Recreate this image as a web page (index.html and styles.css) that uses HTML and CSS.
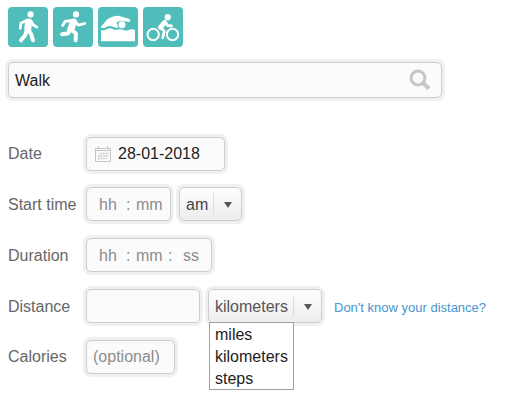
FILE: index.html
```html
<!DOCTYPE html>
<html lang="en">
  <head>
    <meta charset="UTF-8" />
    <meta name="viewport" content="width=device-width, initial-scale=1.0" />
    <title>Log Activity</title>
    <link rel="stylesheet" href="styles.css">
  </head>
  <body>
    <div class="activities">
      <a class="activity" title="Walk">
        <svg viewBox="0 0 40 40">
          <circle cx="22.6" cy="7.4" r="3.1" />
          <path class="torso" d="M20.6 15L19.8 22" />
          <path class="limb" d="M18.5 13.5L12.8 16.3L12.3 21.3M23 14L25.3 18L28.8 20" />
          <path class="leg" d="M19 23L17 28.5L13 33.3M20.6 23L23.3 27.5L25 33.3" />
        </svg>
      </a>
      <a class="activity" title="Run">
        <svg viewBox="0 0 40 40">
          <circle cx="23" cy="7.4" r="3.1" />
          <path class="torso" d="M20.5 15L18 22" />
          <path class="limb" d="M19 13.5L12 14.5L9.7 18.5M22 14L25.3 18.2L31.8 16.5" />
          <path class="leg" d="M17 22L14.8 26.5L9 27.2M18 22.5L23 26.5L22.6 33.3" />
        </svg>
      </a>
      <a class="activity" title="Swim">
        <svg viewBox="0 0 40 40">
          <path d="M3 19.8L9 12.5Q14 9 20.5 8.8L31.5 12Q33.2 13.8 31 15L23 13.8L18.5 15.2L20.3 20.3Q18 21.6 15 19.8Q11.5 18 8.5 20.1Q5.5 21.8 3 20.4Z" />
          <circle cx="24" cy="17.8" r="3.5" />
          <path d="M3 22.8Q5.8 24.2 8.7 22.3Q11.5 20.4 14.5 22.1Q17.5 23.8 20 22.6Q23 21.6 26 23.2Q29 24.2 32 22.6Q34.5 21.8 37 23V34.3H3Z" />
        </svg>
      </a>
      <a class="activity" title="Cycle">
        <svg viewBox="0 0 40 40">
          <circle cx="24.7" cy="10.2" r="3.1" />
          <circle class="wheel" cx="10.2" cy="27.5" r="5.7" />
          <circle class="wheel" cx="29.5" cy="27.5" r="5.7" />
          <path class="rider" d="M21.5 15.5L17.5 20.3" />
          <path class="limb" d="M22.3 15L24.5 18.5L28.5 18.8M17.5 20.8L21.3 24L19.7 30.8" />
        </svg>
      </a>
    </div>

    <div class="field search">
      <span>Walk</span>
      <svg class="search-icon" viewBox="0 0 22 22">
        <circle cx="9" cy="9" r="6.9" />
        <path d="M14 14L20 19.5" />
      </svg>
    </div>

    <div class="form">
      <div class="row">
        <label>Date</label>
        <div class="field date">
          <svg class="calendar" viewBox="0 0 16 16">
            <path d="M.5 2.5H15.5V15.5H.5ZM.5 4.5H15.5M3.5 0V3M12.5 0V3" />
            <path class="days" d="M5 7.5H14M3 10H14M3 12.5H12" />
          </svg>
          <span>28-01-2018</span>
        </div>
      </div>

      <div class="row">
        <label class="low">Start time</label>
        <div class="field time start">
          <span class="hours">hh</span>
          <span class="colon">:</span>
          <span class="minutes">mm</span>
        </div>
        <div class="field select ampm">
          <span class="value">am</span>
          <span class="arrow"></span>
        </div>
      </div>

      <div class="row">
        <label class="low">Duration</label>
        <div class="field time duration">
          <span class="hours">hh</span>
          <span class="colon">:</span>
          <span class="minutes">mm</span>
          <span class="colon">:</span>
          <span class="seconds">ss</span>
        </div>
      </div>

      <div class="row">
        <label class="low">Distance</label>
        <div class="field distance"></div>
        <div class="field select unit">
          <span class="value">kilometers</span>
          <span class="arrow"></span>
          <ul class="menu">
            <li>miles</li>
            <li>kilometers</li>
            <li>steps</li>
          </ul>
        </div>
        <a class="help">Don't know your distance?</a>
      </div>

      <div class="row">
        <label>Calories</label>
        <div class="field calories">(optional)</div>
      </div>
    </div>
  </body>
</html>
```
FILE: styles.css
```css
* {
  box-sizing: border-box;
}
body {
  margin: 0;
  min-height: 402px;
  padding: 7px 8px 0;
  background: #fff;
  color: #333;
  font-family: "Liberation Sans", Arial, sans-serif;
  font-size: 16px;
  line-height: 22px;
}
.activities {
  display: flex;
  gap: 5px;
  margin-bottom: 15px;
}
.activity {
  width: 40px;
  height: 40px;
  border-radius: 4px;
  background: #51bdba;
}
.activity svg {
  display: block;
  fill: #fff;
  stroke: #fff;
  stroke-width: 0;
  stroke-linecap: round;
  stroke-linejoin: round;
}
.activity .torso {
  fill: none;
  stroke-width: 7;
}
.activity .rider {
  fill: none;
  stroke-width: 5;
}
.activity .limb {
  fill: none;
  stroke-width: 2.8;
}
.activity .leg {
  fill: none;
  stroke-width: 4;
}
.activity .wheel {
  fill: none;
  stroke-width: 1.9;
}
.field {
  display: flex;
  align-items: center;
  height: 34px;
  border: 1px solid #ccc;
  border-radius: 5px;
  background: #fbfbfb;
  box-shadow: 0 0 0 3px #f0f0f0;
  white-space: nowrap;
}
.search {
  justify-content: space-between;
  width: 434px;
  height: 36px;
  padding: 0 10px 0 6px;
}
.search span {
  padding-top: 2px;
  color: #222;
}
.search-icon {
  width: 22px;
  height: 22px;
  fill: none;
  stroke: #c6c6c6;
  stroke-width: 3;
}
.search-icon path {
  stroke-width: 4;
}
.form {
  display: flex;
  flex-direction: column;
  gap: 17px;
  margin-top: 39px;
}
.row {
  display: flex;
  align-items: center;
}
.row:first-child {
  margin-bottom: -1px;
}
label {
  width: 78px;
  color: #666;
}
.low {
  padding-top: 2px;
}
.date {
  width: 139px;
  padding-left: 8px;
  color: #222;
}
.calendar {
  width: 16px;
  height: 16px;
  margin-right: 7px;
  fill: none;
  stroke: #c4c4c4;
}
.calendar .days {
  stroke-width: 1.5;
  stroke-dasharray: 1.7 1;
}
.time {
  padding: 2px 0 0 12px;
  color: #8c8c8c;
}
.start {
  width: 85px;
}
.duration {
  width: 126px;
}
.hours {
  width: 27px;
}
.colon {
  width: 5px;
}
.minutes {
  width: 32px;
  margin-left: 5px;
}
.seconds {
  margin-left: 10px;
}
.select {
  position: relative;
  margin-left: 8px;
  padding-left: 6px;
  background: linear-gradient(#fefefe, #ededed);
}
.select .value {
  flex: 1;
  padding-top: 2px;
  color: #444;
}
.arrow {
  display: flex;
  align-items: center;
  justify-content: center;
  width: 28px;
  height: 22px;
  border-left: 1px solid #ddd;
}
.arrow::before {
  content: "";
  margin-top: 2px;
  border: 4px solid transparent;
  border-top: 6px solid #555;
  border-bottom: 0;
}
.ampm {
  width: 63px;
}
.unit {
  width: 114px;
}
.unit .value {
  color: #555;
}
.distance {
  width: 114px;
}
.menu {
  position: absolute;
  z-index: 1;
  top: 32px;
  left: 0;
  width: 85px;
  height: 68px;
  margin: 0;
  padding: 1px 0 0 5px;
  border: 1px solid #a0a0a0;
  background: #fff;
  color: #222;
  list-style: none;
}
.help {
  margin-left: 12px;
  padding-top: 3px;
  color: #4795d1;
  font-size: 13px;
}
.calories {
  width: 89px;
  padding-left: 6px;
  color: #8c8c8c;
}
```
